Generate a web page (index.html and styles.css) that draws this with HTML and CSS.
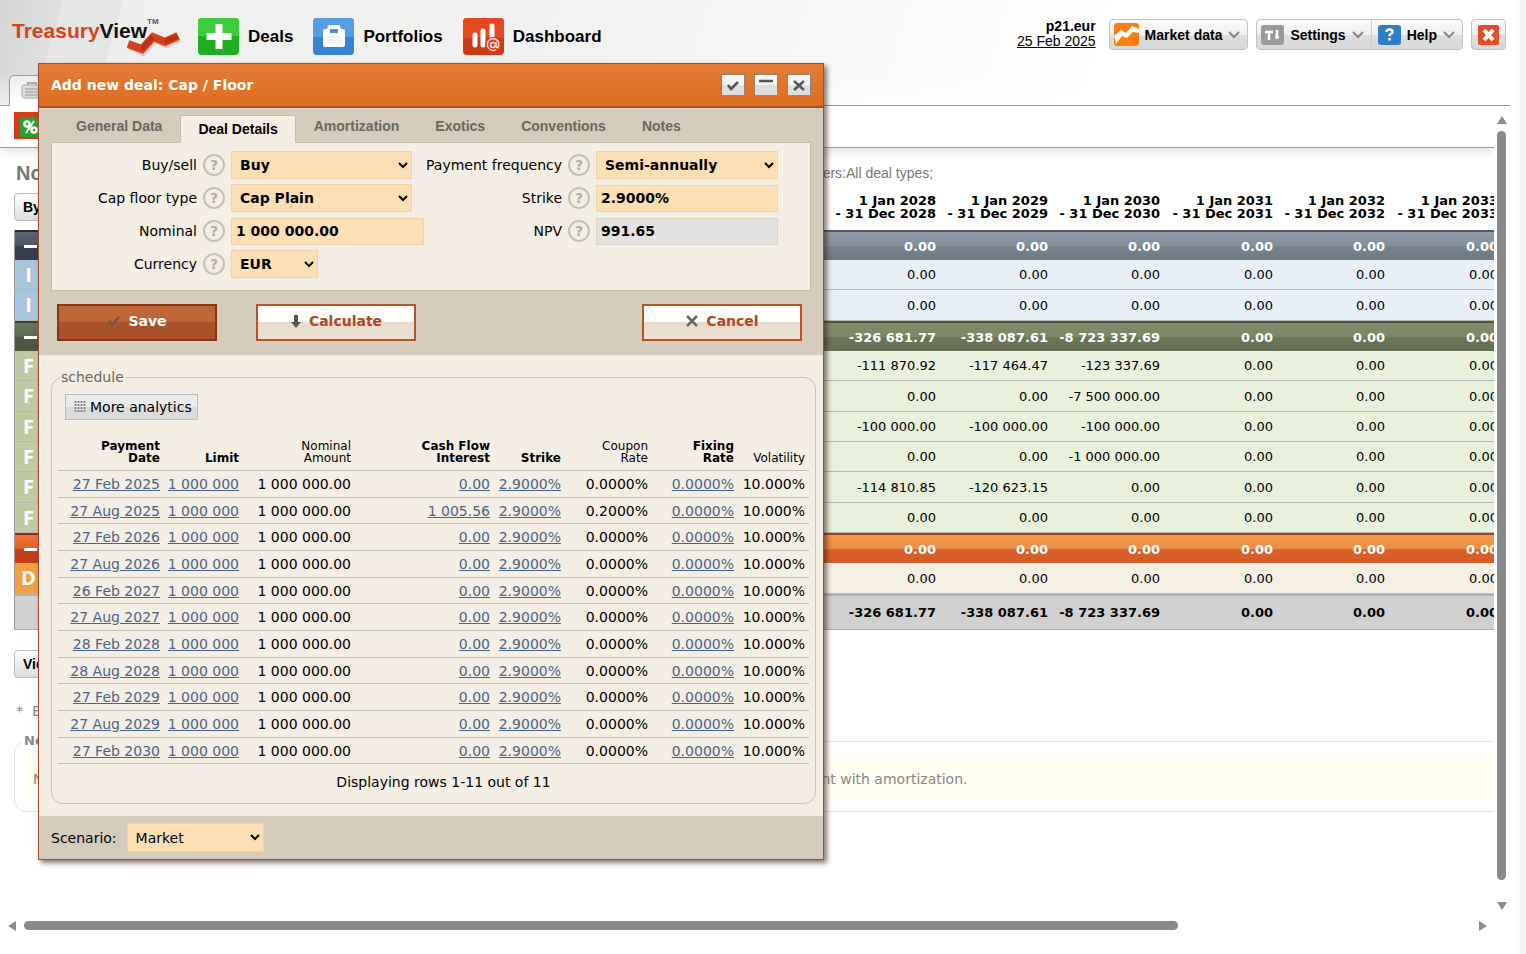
FILE: index.html
```html
<!DOCTYPE html>
<html lang="en">

<head>
  <meta charset="UTF-8">
  <meta name="viewport" content="width=device-width, initial-scale=1.0">
  <title>TreasuryView</title>
  <link rel="stylesheet" href="styles.css">
</head>

<body>
  <header class="header">
    <div class="top">
      <a class="logo" href="#">
        <span class="logo-red">Treasury</span><span class="logo-black">View</span><sup>TM</sup>
        <svg class="logo-line" viewBox="0 0 54 26" width="54" height="26">
          <path d="M3 13 L15 19 L27 6 L38 11 L52 5" transform="translate(1 3)" fill="none" stroke="#ccc" stroke-width="6"/>
          <path d="M1 13 L15 18 L26 6 L38 11 L51 5" fill="none" stroke="#d8401c" stroke-width="8"/>
          <path d="M15 18 L26 6 M38 11 L51 5" fill="none" stroke="#b93216" stroke-width="5"/>
        </svg>
      </a>
      <nav class="nav">
        <a href="#">
          <svg width="41" height="37" viewBox="0 0 41 37">
            <rect width="41" height="37" rx="4" fill="#1fae1f"/>
            <path d="M0 18V4a4 4 0 0 1 4-4h33a4 4 0 0 1 4 4v14z" fill="#3ccc3c"/>
            <path d="M17.500 6h7v9h9v7h-9v9h-7v-9h-9v-7h9z" fill="#fff"/>
          </svg>
          Deals
        </a>
        <a href="#">
          <svg width="41" height="37" viewBox="0 0 41 37">
            <rect width="41" height="37" rx="4" fill="#3a82d0"/>
            <path d="M0 19V4a4 4 0 0 1 4-4h33a4 4 0 0 1 4 4v15z" fill="#559de6"/>
            <path d="M10 13q0-2 2-2h2l1-3q0-1 2-1h8q2 0 2 1l1 3h2q2 0 2 2v14q0 2-2 2H12q-2 0-2-2z" fill="#fff"/>
            <path d="M17 15v-3q0-1 1-1h6q1 0 1 1v3z" fill="#4a90da"/>
            <path d="M14 19h14M14 22h14M14 25h14" stroke="#d5e2f0"/>
          </svg>
          Portfolios
        </a>
        <a href="#">
          <svg width="41" height="37" viewBox="0 0 41 37">
            <rect width="41" height="37" rx="4" fill="#cf3a16"/>
            <path d="M0 20V4a4 4 0 0 1 4-4h33a4 4 0 0 1 4 4v16z" fill="#e8481f"/>
            <path d="M12 17v10M20 13v14M29 8v10" stroke="#fff" stroke-width="5" stroke-linecap="round"/>
            <circle cx="30" cy="27" r="8" fill="#d53e18"/>
            <circle cx="30" cy="27" r="2.500" fill="none" stroke="#fbdcd2" stroke-width="1.500"/>
            <path d="M33 24v4q0 2 2 1.500q2-6-2-8q-5-2-8 2q-2 5 2 8q3 2 6 0" fill="none" stroke="#fbdcd2" stroke-width="1.500"/>
          </svg>
          Dashboard
        </a>
      </nav>
      <div class="user">
        <strong>p21.eur</strong>
        <a href="#">25 Feb 2025</a>
      </div>
      <div class="menu">
        <button type="button">
          <svg width="25" height="23" viewBox="0 0 25 23">
            <rect width="25" height="23" rx="3" fill="#f77f0e"/>
            <path d="M0 13l7-6 5 3 6-7 7 3v4l-6-1-6 6-5-2-6 8z" fill="#fff"/>
          </svg>
          Market data
          <svg class="arrow" width="12" height="8" viewBox="0 0 12 8"><path d="M1 1l5 5 5-5" fill="none" stroke="#888" stroke-width="2"/></svg>
        </button>
      </div>
      <div class="menu">
        <button type="button">
          <svg width="23" height="20" viewBox="0 0 23 20">
            <rect width="23" height="20" rx="3" fill="#9a9a9a"/>
            <path d="M4 7h8M8 6v9M16 5v9M14 12h4" stroke="#fff" stroke-width="2.500"/>
          </svg>
          Settings
          <svg class="arrow" width="12" height="8" viewBox="0 0 12 8"><path d="M1 1l5 5 5-5" fill="none" stroke="#888" stroke-width="2"/></svg>
        </button>
        <button type="button">
          <svg width="23" height="20" viewBox="0 0 23 20">
            <rect width="23" height="20" rx="3" fill="#2f7cc8"/>
            <path d="M8.500 7q0-2.500 3-2.500t3 2.500q0 1.500-2 2.200q-1 .5-1 2" fill="none" stroke="#fff" stroke-width="2.500"/>
            <path d="M10.200 13h2.600v2.500h-2.600z" fill="#fff"/>
          </svg>
          Help
          <svg class="arrow" width="12" height="8" viewBox="0 0 12 8"><path d="M1 1l5 5 5-5" fill="none" stroke="#888" stroke-width="2"/></svg>
        </button>
      </div>
      <div class="menu">
        <button type="button" class="logout" aria-label="Log out">
          <svg width="21" height="20" viewBox="0 0 21 20">
            <rect width="21" height="20" rx="2" fill="#e04f26"/>
            <path d="M6 5l9 10M15 5L6 15" stroke="#fff" stroke-width="4"/>
          </svg>
        </button>
      </div>
    </div>
    <div class="pages">
      <a class="page-tab" href="#" aria-label="Portfolio">
        <svg width="24" height="18" viewBox="0 0 24 18">
          <path d="M7 4V2h8v2" fill="none" stroke="#aaa" stroke-width="2"/>
          <rect x="1" y="4" width="22" height="13" rx="2" fill="#ddd" stroke="#aaa"/>
          <path d="M4 8h16M4 11h16M4 14h16" stroke="#999"/>
        </svg>
      </a>
    </div>
  </header>

  <main class="main">
    <div class="content">
      <div class="toolbar">
        <button type="button" class="rate" aria-label="Rates">
          <svg width="28" height="27" viewBox="0 0 28 27">
            <rect width="28" height="27" fill="#d03c1c"/>
            <rect x="6" y="5" width="22" height="20" rx="2" fill="#26a32c"/>
            <circle cx="13" cy="12" r="2.500" fill="none" stroke="#fff" stroke-width="2.500"/>
            <circle cx="20" cy="18" r="2.500" fill="none" stroke="#fff" stroke-width="2.500"/>
            <path d="M20 9l-8 12" stroke="#fff" stroke-width="2"/>
          </svg>
        </button>
      </div>
      <div class="report">
        <div class="report-head">
          <h1>Nominal</h1>
          <p>Filters:All deal types;</p>
        </div>
        <button type="button" class="btn">By</button>
        <table class="flows">
          <colgroup>
            <col class="c-mark">
            <col>
            <col class="c-num" span="3">
            <col class="c-num-wide">
            <col class="c-num">
            <col class="c-num-wide">
          </colgroup>
          <thead>
            <tr>
              <td colspan="2"></td>
              <th>1 Jan 2028<br>- 31 Dec 2028</th>
              <th>1 Jan 2029<br>- 31 Dec 2029</th>
              <th>1 Jan 2030<br>- 31 Dec 2030</th>
              <th>1 Jan 2031<br>- 31 Dec 2031</th>
              <th>1 Jan 2032<br>- 31 Dec 2032</th>
              <th>1 Jan 2033<br>- 31 Dec 2033</th>
            </tr>
          </thead>
          <tbody class="flows-body"></tbody>
        </table>
        <button type="button" class="btn">View</button>
        <p class="hint">*&nbsp; Est</p>
        <fieldset class="notes">
          <legend>Notes</legend>
          <p>Nominal cash flows are shown per payment date, including the interests, fees and repayments of each instrument with amortization.</p>
        </fieldset>
      </div>
    </div>
    <div class="scroll-y">
      <svg width="10" height="8" viewBox="0 0 10 8"><path d="M5 0l5 8H0z" fill="#8a8a8a"/></svg>
      <div class="thumb"></div>
      <svg width="10" height="8" viewBox="0 0 10 8"><path d="M5 8l5-8H0z" fill="#8a8a8a"/></svg>
    </div>
    <div class="scroll-x">
      <svg width="8" height="10" viewBox="0 0 8 10"><path d="M0 5l8-5v10z" fill="#8a8a8a"/></svg>
      <div class="thumb"></div>
      <svg width="8" height="10" viewBox="0 0 8 10"><path d="M8 5L0 0v10z" fill="#8a8a8a"/></svg>
    </div>
  </main>

  <section class="dialog" role="dialog" aria-labelledby="dialog-title">
    <div class="dialog-title">
      <h2 id="dialog-title">Add new deal: Cap / Floor</h2>
      <button type="button" aria-label="Apply">
        <svg width="14" height="14" viewBox="0 0 14 14"><path d="M2 7l3 4 7-7" fill="none" stroke="#555" stroke-width="2.500"/></svg>
      </button>
      <button type="button" aria-label="Minimize">
        <svg width="14" height="14" viewBox="0 0 14 14"><path d="M0 3h14" stroke="#555" stroke-width="2.500"/></svg>
      </button>
      <button type="button" aria-label="Close">
        <svg width="14" height="14" viewBox="0 0 14 14"><path d="M2 3l10 9M12 3L2 12" stroke="#555" stroke-width="2.500"/></svg>
      </button>
    </div>

    <form class="deal">
      <div class="tabs">
        <a href="#">General Data</a>
        <a href="#" class="active">Deal Details</a>
        <a href="#">Amortization</a>
        <a href="#">Exotics</a>
        <a href="#">Conventions</a>
        <a href="#">Notes</a>
      </div>
      <div class="fields">
        <label for="side">Buy/sell</label>
        <button type="button" class="help" aria-label="Help">?</button>
        <select id="side" class="w-mid"><option>Buy</option></select>
        <label for="freq">Payment frequency</label>
        <button type="button" class="help" aria-label="Help">?</button>
        <select id="freq"><option>Semi-annually</option></select>

        <label for="type">Cap floor type</label>
        <button type="button" class="help" aria-label="Help">?</button>
        <select id="type" class="w-mid"><option>Cap Plain</option></select>
        <label for="strike">Strike</label>
        <button type="button" class="help" aria-label="Help">?</button>
        <input id="strike" type="text" value="2.9000%">

        <label for="nominal">Nominal</label>
        <button type="button" class="help" aria-label="Help">?</button>
        <input id="nominal" type="text" value="1 000 000.00">
        <label for="npv">NPV</label>
        <button type="button" class="help" aria-label="Help">?</button>
        <input id="npv" type="text" value="991.65" readonly>

        <label for="currency">Currency</label>
        <button type="button" class="help" aria-label="Help">?</button>
        <select id="currency" class="w-small"><option>EUR</option></select>
      </div>
      <div class="actions">
        <button type="button" class="save">
          <svg width="14" height="12" viewBox="0 0 14 12"><path d="M2 6l3 4 7-8" fill="none" stroke="#6b5a4c" stroke-width="2.500"/></svg>
          Save
        </button>
        <button type="button">
          <svg width="12" height="14" viewBox="0 0 12 14"><path d="M6 1v8" stroke="#555" stroke-width="4"/><path d="M1 8h10l-5 6z" fill="#555"/></svg>
          Calculate
        </button>
        <button type="button" class="cancel">
          <svg width="14" height="12" viewBox="0 0 14 12"><path d="M2 1l10 10M12 1L2 11" stroke="#666" stroke-width="2.500"/></svg>
          Cancel
        </button>
      </div>
    </form>

    <fieldset class="schedule">
      <legend>schedule</legend>
      <button type="button" class="more">
        <svg width="12" height="12" viewBox="0 0 12 12"><path d="M1.500 0v12M4.500 0v12M7.500 0v12M10.500 0v12" stroke="#888" stroke-width="2" stroke-dasharray="2 1"/></svg>
        More analytics
      </button>
      <table>
        <colgroup>
          <col class="s-date">
          <col class="s-limit">
          <col class="s-amount">
          <col class="s-interest">
          <col class="s-strike">
          <col class="s-coupon">
          <col class="s-fixing">
          <col class="s-vol">
        </colgroup>
        <thead>
          <tr>
            <th>Payment<br>Date</th>
            <th>Limit</th>
            <th class="light">Nominal<br>Amount</th>
            <th>Cash Flow<br>Interest</th>
            <th>Strike</th>
            <th class="light">Coupon<br>Rate</th>
            <th>Fixing<br>Rate</th>
            <th class="light">Volatility</th>
          </tr>
        </thead>
        <tbody class="schedule-body"></tbody>
      </table>
      <p class="paging">Displaying rows 1-11 out of 11</p>
    </fieldset>

    <div class="dialog-foot">
      <label for="scenario">Scenario:</label>
      <select id="scenario"><option>Market</option></select>
    </div>
  </section>

  <script src="script.js"></script>
</body>

</html>
```
FILE: styles.css
```css
* {
  margin: 0;
  padding: 0;
  box-sizing: border-box;
}

body {
  min-height: 100vh;
  display: flex;
  flex-direction: column;
  position: relative;
  font: 14px/18px Verdana, "DejaVu Sans", sans-serif;
  color: #000;
  background: linear-gradient(to left, #f0f0f0, #fff 12px);
}

button,
input,
select {
  font: inherit;
  color: inherit;
}

/* header */
.header {
  background:
    linear-gradient(to left, #f0f0f0, transparent 12px),
    linear-gradient(to bottom, transparent 70%, rgba(255, 255, 255, .6)),
    linear-gradient(106deg, #d3d4d4 0, #dfe0e0 60px, #e6e7e7 61px, #e4e5e5 118px, #efefee 119px, #f2f2f1 600px, #fff 1100px);
}

.top {
  height: 75px;
  display: flex;
  align-items: flex-start;
  padding: 18px 20px 0 12px;
}

.logo {
  position: relative;
  width: 186px;
  font: bold 21px/26px "Liberation Sans", Arial, sans-serif;
  text-decoration: none;
  white-space: nowrap;
  display: flex;
}

.logo-red {
  color: #d8431c;
}

.logo-black {
  color: #111;
}

.logo sup {
  font-size: 8px;
  line-height: 8px;
  color: #555;
}

.logo-line {
  position: absolute;
  left: 115px;
  top: 13px;
}

.nav {
  display: flex;
  gap: 20px;
}

.nav a {
  display: flex;
  align-items: center;
  gap: 9px;
  font: bold 17px/20px "Liberation Sans", Arial, sans-serif;
  color: #000;
  text-decoration: none;
}

.user {
  margin: 1px 0 0 auto;
  text-align: right;
  font: 14px/15px "Liberation Sans", Arial, sans-serif;
}

.user strong {
  display: block;
}

.user a {
  color: #000;
}

.menu {
  display: flex;
  height: 31px;
  margin: 1px 0 0 8px;
  border: 1px solid #c4c4bc;
  border-radius: 4px;
  background: linear-gradient(#fbfbfb, #f0f0f0 50%, #dedede 52%, #d8d8d8);
}

.user + .menu {
  margin-left: 13px;
}

.menu button {
  display: flex;
  align-items: center;
  gap: 6px;
  padding: 0 7px 0 4px;
  border: 0;
  background: none;
  font: bold 14px/16px "Liberation Sans", Arial, sans-serif;
}

.menu button + button {
  padding: 0 7px 0 6px;
  border-left: 1px solid #ccc;
}

.menu .logout {
  padding: 0 6px;
}

.pages {
  height: 31px;
  display: flex;
  padding-left: 9px;
  border-bottom: 1px solid #999;
  margin-right: 16px;
}

.page-tab {
  width: 60px;
  height: 31px;
  padding: 5px 0 0 11px;
  border: 1px solid #999;
  border-bottom: 0;
  border-radius: 5px 0 0 0;
  background: linear-gradient(#eee, #fff);
}

/* report behind the dialog */
.main {
  flex: 1;
  display: grid;
  grid-template-columns: minmax(0, 1fr) 32px;
  grid-template-rows: 1fr 48px;
}

.content {
  overflow: hidden;
}

.toolbar {
  height: 42px;
  padding: 6px 14px;
  background: #fff;
  border-bottom: 1px solid #999;
  box-shadow: 0 2px 12px rgba(0, 0, 0, .15);
}

.rate {
  display: block;
  border: 0;
  background: none;
}

.report {
  padding: 13px 0 0 14px;
}

.report-head {
  display: flex;
  align-items: center;
  height: 24px;
  padding-left: 2px;
  margin-bottom: 8px;
  font-family: "Liberation Sans", Arial, sans-serif;
  color: #777;
}

.report-head h1 {
  width: 788px;
  font-size: 20px;
}

.btn {
  display: block;
  height: 28px;
  padding: 0 8px;
  border: 1px solid #bbb;
  border-radius: 4px;
  background: linear-gradient(#fff, #ddd);
  font: bold 14px/16px "Liberation Sans", Arial, sans-serif;
}

.flows {
  width: calc(100% + 8px);
  margin: -28px 0 20px;
  table-layout: fixed;
  border-spacing: 0;
  font-size: 13px;
  line-height: 13px;
  text-align: right;
}

.c-mark {
  width: 28px;
}

.c-num {
  width: 112px;
}

.c-num-wide {
  width: 113px;
}

.flows th,
.flows td {
  padding-right: 4px;
  white-space: nowrap;
}

.flows thead th {
  height: 37px;
  padding-bottom: 10px;
  vertical-align: bottom;
}

.flows td {
  height: 30px;
  border-bottom: 1px solid #b4b8b4;
}

.flows-body tr:nth-child(3n) td {
  height: 31px;
}

.flows thead td {
  border: 0;
}

.flows .mark {
  padding: 0;
  text-align: center;
  font: bold 20px/20px "Open Sans", sans-serif;
  color: #fff;
  border-left: 1px solid #999;
}

.minus {
  display: block;
  width: 13px;
  height: 3px;
  margin-left: 9px;
  background: #fff;
}

.flows .group td {
  height: 30px;
  border-top: 2px solid rgba(0, 0, 0, .25);
  border-bottom: 0;
  font-weight: bold;
  color: #fff;
}

.blue td {
  background: #eaf0f8;
}

.blue .mark {
  background: #a9c5db;
}

.green td {
  background: #e9f1dc;
}

.green .mark {
  background: #bfcaa3;
}

.orange td {
  background: #f6efe4;
}

.orange .mark {
  background: #f0a040;
}

.blue.group td {
  background: linear-gradient(#919ca8, #848f9a 50%, #77838d 52%, #6f7a84);
}

.blue.group .mark {
  background: linear-gradient(#5b6676, #4a5464 50%, #333d4c 52%, #333d4c);
}

.green.group td {
  background: linear-gradient(#828c6b, #7c8766 50%, #6b7656 52%, #666f55);
}

.green.group .mark {
  background: linear-gradient(#68735a, #5c6850 50%, #4c5840 52%, #4c5840);
}

.orange.group td {
  background: linear-gradient(#f29a48, #ee8d45 50%, #dc6028 52%, #d25c2a);
}

.orange.group .mark {
  background: linear-gradient(#ee7838, #e06028 50%, #c43c18 52%, #c43c18);
}

.flows .total td {
  height: 36px;
  background: #d0d0d0;
  border-top: 2px solid #b0b0b0;
  border-bottom: 1px solid #aaa;
  font-weight: bold;
}

.hint {
  margin: 24px 2px 12px;
  color: #888;
}

.notes {
  min-width: 0;
  margin-right: -20px;
  padding: 6px 8px 9px;
  border: 1px solid #e2e2e2;
  border-radius: 12px;
  color: #888;
}

.notes legend {
  padding: 0 1px;
  font-size: 13px;
  font-weight: bold;
}

.notes p {
  padding: 14px 10px;
  background: #fffef0;
  white-space: nowrap;
}

.scroll-y {
  display: flex;
  flex-direction: column;
  align-items: flex-start;
  gap: 7px;
  padding: 10px 3px 0;
}

.scroll-y .thumb {
  flex: 1;
  width: 9px;
  margin-bottom: 15px;
}

.thumb {
  border-radius: 5px;
  background: #8a8a8a;
}

.scroll-y svg,
.scroll-x svg {
  flex: none;
}

.scroll-y svg:last-child {
  margin-bottom: -4px;
}

.scroll-x {
  display: flex;
  align-items: center;
  padding: 10px 7px 19px 8px;
}

.scroll-x .thumb {
  width: 78%;
  height: 9px;
  margin: 0 auto 0 8px;
}

/* dialog window */
.dialog {
  position: absolute;
  left: 38px;
  top: 63px;
  width: 786px;
  border: 1px solid #a94a32;
  background: #f5eee4;
  box-shadow: 3px 3px 5px rgba(60, 30, 20, .6);
}

.dialog-title {
  height: 44px;
  display: flex;
  align-items: center;
  gap: 9px;
  padding: 0 12px;
  background: linear-gradient(#e37c37, #e0732a 60%, #dc6d22);
  border-bottom: 2px solid #a95420;
}

.dialog-title h2 {
  margin-right: auto;
  font-size: 14px;
  color: #fff;
}

.dialog-title button {
  width: 24px;
  height: 22px;
  display: flex;
  align-items: center;
  justify-content: center;
  border: 1px solid #8f8578;
  background: linear-gradient(#f4f4f4 50%, #dcdfe2 52%);
}

.deal {
  padding: 7px 12px 0;
  background: #d5ccbc;
}

.tabs {
  display: flex;
  height: 27px;
  padding-left: 7px;
}

.tabs a {
  padding: 2px 17px 0;
  border: 1px solid transparent;
  border-bottom: 0;
  font: bold 14px/16px "Liberation Sans", Arial, sans-serif;
  color: #6b6660;
  text-decoration: none;
}

.tabs .active {
  position: relative;
  height: 28px;
  padding-top: 5px;
  border-color: #c4bcae;
  background: #f5eee4;
  color: #000;
}

.fields {
  display: grid;
  grid-template-columns: 145px 22px 193px 132px 22px 182px;
  grid-auto-rows: 28px;
  gap: 5px 6px;
  align-items: center;
  height: 149px;
  padding-top: 8px;
  border: 1px solid #c4bcae;
  background: #f5eee4;
}

.fields label {
  justify-self: end;
  white-space: nowrap;
}

.fields select,
.fields input {
  width: 100%;
  height: 28px;
  border: 1px solid #efd3a8;
  background-color: #fddfb3;
  font-weight: bold;
}

.fields select {
  padding: 0 4px;
}

.fields input {
  height: 27px;
  padding: 0 4px;
}

.fields .w-mid {
  width: 181px;
}

.fields .w-small {
  width: 87px;
}

.fields input[readonly] {
  background: #e2e2e2;
  border-color: #ddd4c4;
}

.help {
  width: 22px;
  height: 22px;
  border: 2px solid #c4c0b9;
  border-radius: 50%;
  background: none;
  color: #b0ada7;
  font-weight: bold;
  line-height: 16px;
}

.actions {
  display: flex;
  gap: 39px;
  padding: 13px 9px 14px 6px;
}

.actions button {
  width: 160px;
  height: 37px;
  display: flex;
  align-items: center;
  justify-content: center;
  gap: 7px;
  padding-bottom: 3px;
  border: 2px solid #b8542a;
  background: linear-gradient(#fff 48%, #e8dccb 50%, #eee3d4);
  font-weight: bold;
  color: #b4451f;
}

.actions .save {
  border-color: #8b3518;
  background: linear-gradient(#bf6537 48%, #a9522a 50%);
  color: #fff;
}

.actions .cancel {
  margin-left: auto;
}

.schedule {
  min-width: 0;
  margin: 13px 7px 12px 12px;
  padding: 8px 6px 12px;
  border: 1px solid #c8c2ba;
  border-radius: 12px;
}

.schedule legend {
  margin-left: 2px;
  padding: 0 1px;
  color: #6b6660;
}

.more {
  height: 26px;
  display: flex;
  align-items: center;
  gap: 4px;
  margin: 0 0 18px 7px;
  padding: 0 5px 0 8px;
  border: 1px solid #bbb;
  background: linear-gradient(#ececec 50%, #dadcdc 52%);
}

.schedule table {
  width: 100%;
  table-layout: fixed;
  border-spacing: 0;
  text-align: right;
}

.s-date {
  width: 106px;
}

.s-limit {
  width: 79px;
}

.s-amount {
  width: 112px;
}

.s-interest {
  width: 139px;
}

.s-strike {
  width: 71px;
}

.s-coupon {
  width: 87px;
}

.s-fixing {
  width: 86px;
}

.s-vol {
  width: 71px;
}

.schedule th,
.schedule td {
  padding-right: 4px;
  border-bottom: 1px solid #c4c0b8;
  white-space: nowrap;
}

.schedule th {
  height: 33px;
  padding-bottom: 6px;
  font-size: 12px;
  line-height: 12px;
  vertical-align: bottom;
}

.schedule .light {
  font-weight: normal;
}

.schedule td {
  height: 27px;
}

.schedule tr:nth-child(3n+2) td {
  height: 26px;
}

.schedule a {
  color: #4a6488;
}

.paging {
  margin-top: 9px;
  padding-left: 20px;
  text-align: center;
}

.dialog-foot {
  display: flex;
  align-items: center;
  gap: 10px;
  padding: 7px 12px;
  background: #d5ccbc;
}

.dialog-foot select {
  width: 137px;
  height: 29px;
  padding: 0 4px;
  border: 1px solid #efd3a8;
  background-color: #fddfb3;
}
```
FILE: script.js
```js
// cash flow report
const flows = [
  { type: 'blue group', mark: '', values: ['0.00', '0.00', '0.00', '0.00', '0.00', '0.00'] },
  { type: 'blue', mark: 'I', values: ['0.00', '0.00', '0.00', '0.00', '0.00', '0.00'] },
  { type: 'blue', mark: 'I', values: ['0.00', '0.00', '0.00', '0.00', '0.00', '0.00'] },
  { type: 'green group', mark: '', values: ['-326 681.77', '-338 087.61', '-8 723 337.69', '0.00', '0.00', '0.00'] },
  { type: 'green', mark: 'F', values: ['-111 870.92', '-117 464.47', '-123 337.69', '0.00', '0.00', '0.00'] },
  { type: 'green', mark: 'F', values: ['0.00', '0.00', '-7 500 000.00', '0.00', '0.00', '0.00'] },
  { type: 'green', mark: 'F', values: ['-100 000.00', '-100 000.00', '-100 000.00', '0.00', '0.00', '0.00'] },
  { type: 'green', mark: 'F', values: ['0.00', '0.00', '-1 000 000.00', '0.00', '0.00', '0.00'] },
  { type: 'green', mark: 'F', values: ['-114 810.85', '-120 623.15', '0.00', '0.00', '0.00', '0.00'] },
  { type: 'green', mark: 'F', values: ['0.00', '0.00', '0.00', '0.00', '0.00', '0.00'] },
  { type: 'orange group', mark: '', values: ['0.00', '0.00', '0.00', '0.00', '0.00', '0.00'] },
  { type: 'orange', mark: 'D', values: ['0.00', '0.00', '0.00', '0.00', '0.00', '0.00'] },
  { type: 'total', mark: '', values: ['-326 681.77', '-338 087.61', '-8 723 337.69', '0.00', '0.00', '0.00'] }
]

document.querySelector('.flows-body').innerHTML = flows.map(row => `
  <tr class="${row.type}">
    <td class="mark">${row.type.includes('group') ? '<span class="minus"></span>' : row.mark}</td>
    <td></td>
    ${row.values.map(v => `<td>${v}</td>`).join('')}
  </tr>`).join('')

// deal schedule
const dates = [
  '27 Feb 2025', '27 Aug 2025', '27 Feb 2026', '27 Aug 2026', '26 Feb 2027', '27 Aug 2027',
  '28 Feb 2028', '28 Aug 2028', '27 Feb 2029', '27 Aug 2029', '27 Feb 2030'
]

document.querySelector('.schedule-body').innerHTML = dates.map((date, i) => {
  const interest = i === 1 ? '1 005.56' : '0.00'
  const coupon = i === 1 ? '0.2000%' : '0.0000%'
  return `
  <tr>
    <td><a href="#">${date}</a></td>
    <td><a href="#">1 000 000</a></td>
    <td>1 000 000.00</td>
    <td><a href="#">${interest}</a></td>
    <td><a href="#">2.9000%</a></td>
    <td>${coupon}</td>
    <td><a href="#">0.0000%</a></td>
    <td>10.000%</td>
  </tr>`
}).join('')
```
